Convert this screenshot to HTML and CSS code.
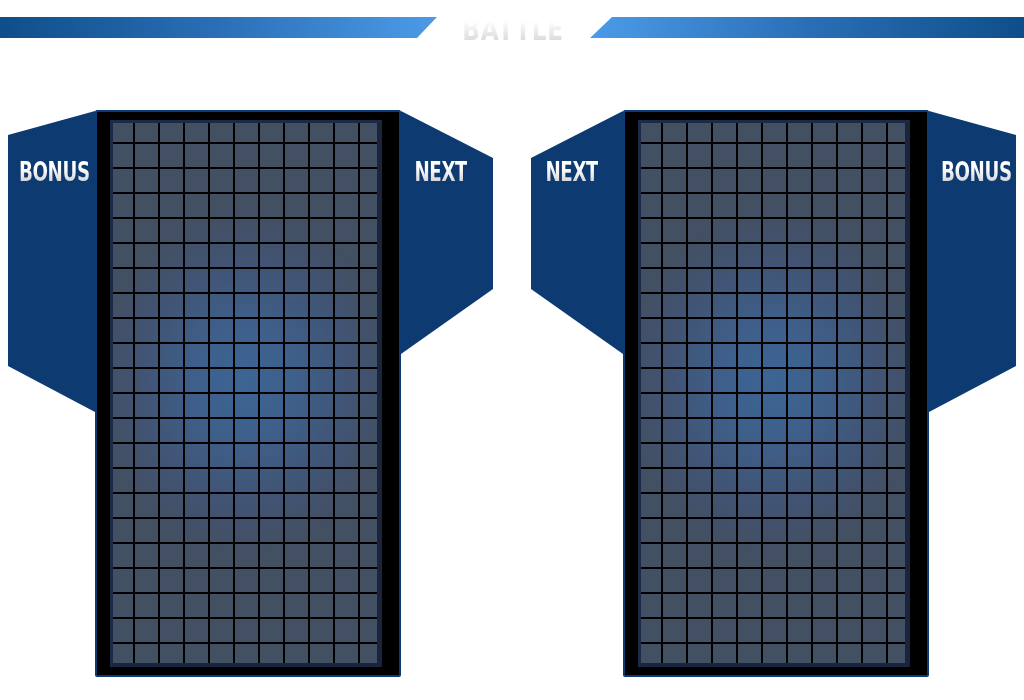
FILE: index.html
```html
<!DOCTYPE html>
<html lang="en">
<head>
<meta charset="utf-8">
<title>Battle</title>
<link rel="stylesheet" href="styles.css">
</head>
<body>
<header class="top">
 <div class="bar bar-left"></div>
 <h1 class="title"><span class="title-text">BATTLE</span></h1>
 <div class="bar bar-right"></div>
</header>
<main class="arena">
 <section class="player">
  <div class="side bonus-left"><span class="tag tag-bonus">BONUS</span></div>
  <div class="board"><div class="well"></div></div>
  <div class="side next-left"><span class="tag tag-next">NEXT</span></div>
 </section>
 <section class="player">
  <div class="side next-right"><span class="tag tag-next">NEXT</span></div>
  <div class="board"><div class="well"></div></div>
  <div class="side bonus-right"><span class="tag tag-bonus">BONUS</span></div>
 </section>
</main>
</body>
</html>
```
FILE: styles.css
```css
body{margin:0;background:#ffffff;font-family:"DejaVu Sans Condensed","DejaVu Sans",sans-serif;font-stretch:condensed;}
.top{display:flex;align-items:flex-start;padding-top:17px;height:21px;}
.bar{height:21px;}
.bar-left{width:437px;background:linear-gradient(to right,#0e4e8a,#2a6fb6 50%,#4c9be8);
clip-path:polygon(0 0,100% 0,calc(100% - 20px) 100%,0 100%);}
.bar-right{width:434px;background:linear-gradient(to left,#0e4e8a,#2a6fb6 50%,#4c9be8);
clip-path:polygon(22px 0,100% 0,100% 100%,0 100%);}
.title{width:153px;margin:-2px 0 0;text-align:center;font-size:30px;line-height:30px;font-weight:bold;}
.title-text{display:inline-block;transform:scaleX(0.86);letter-spacing:1px;
background:linear-gradient(#ffffff 20%,#eeeeee 50%,#d8d8d8 90%);-webkit-background-clip:text;background-clip:text;color:transparent;}
.arena{display:flex;justify-content:space-between;padding:0 8px;margin-top:72px;}
.player{display:flex;align-items:flex-start;}
.board{box-sizing:border-box;width:306px;height:567px;border:2px solid #0c3a74;border-radius:2px;
background:#000000;padding:8px 17px 8px 13px;}
.well{height:547px;
background:
linear-gradient(to right,transparent 23px,#000 23px,#000 25px,transparent 25px) 0 0/25px 25px,
linear-gradient(to bottom,transparent 22px,#000 22px,#000 24px,transparent 24px) 0 0/25px 25px,
radial-gradient(ellipse 150px 170px at 135px 262px,#3c6595 0,#3e5f8a 35%,#415474 70%,#434f62 100%);
box-shadow:inset 3px 3px 0 #1b2b46,inset -5px -4px 0 #18263d;}
.side{background:#0d3b71;margin-top:1px;display:flex;justify-content:center;padding-top:48px;box-sizing:border-box;}
.bonus-left{width:87px;height:301px;clip-path:polygon(0 24px,100% 0,100% 100%,0 255px);}
.bonus-right{width:87px;height:301px;clip-path:polygon(0 0,100% 24px,100% 255px,0 100%);}
.next-left{width:92px;height:243px;clip-path:polygon(0 0,100% 47px,100% 178px,0 100%);}
.next-right{width:92px;height:243px;clip-path:polygon(0 47px,100% 0,100% 100%,0 178px);}
.tag{display:inline-block;height:30px;font-size:26px;line-height:26px;font-weight:bold;transform:scaleX(0.78);letter-spacing:-0.5px;
background:linear-gradient(#ffffff 30%,#e4e4e4 60%,#bdbdbd 95%);-webkit-background-clip:text;background-clip:text;color:transparent;}
.bonus-left .tag{margin-left:6px;}
.next-left .tag{margin-right:12px;}
.next-right .tag{margin-right:10px;}
.bonus-right .tag{margin-left:8px;}
```
